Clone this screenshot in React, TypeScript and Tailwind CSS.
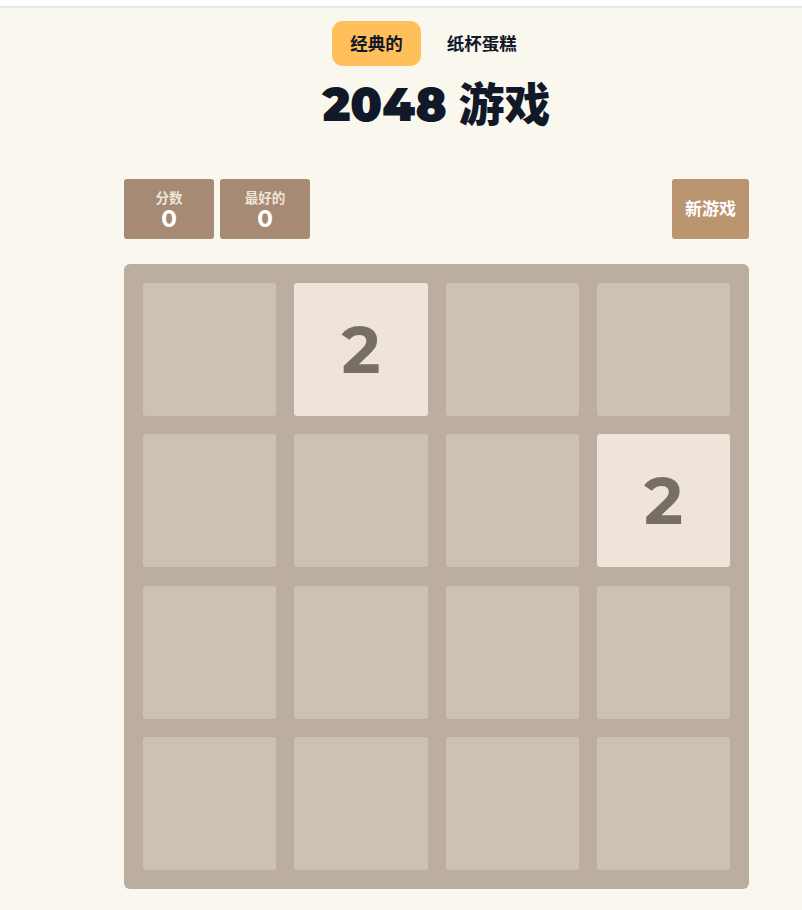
import { useState } from 'react'

type Mode = 'classic' | 'cupcake'

const MODES: Array<{ id: Mode; label: string }> = [
  { id: 'classic', label: '经典的' },
  { id: 'cupcake', label: '纸杯蛋糕' },
]

// 4x4 board, 0 = empty cell
const START_BOARD = [
  [0, 2, 0, 0],
  [0, 0, 0, 2],
  [0, 0, 0, 0],
  [0, 0, 0, 0],
]

const numFont = { fontFamily: '"Montserrat", "Lato", "Noto Sans", "Noto Sans CJK SC", sans-serif' }

const ScoreBox = ({ label, value }: { label: string; value: number }) => (
  <div className="w-[90px] h-[60px] rounded-[3px] bg-[#a68a73] flex flex-col items-center justify-center pt-[2px]">
    <span className="text-[13.5px] font-bold text-[#eee4da] leading-[17px]">{label}</span>
    <span className="text-[23px] font-bold text-white leading-[24px]" style={numFont}>
      {value}
    </span>
  </div>
)

const Tile = ({ value }: { value: number }) => (
  <div
    className={`h-[133px] rounded-[3px] flex items-center justify-center ${
      value ? 'bg-[#eee4da]' : 'bg-[#cdc1b4]'
    }`}
  >
    {value > 0 && (
      <span className="text-[66px] font-bold text-[#776e65] leading-none" style={numFont}>
        {value}
      </span>
    )}
  </div>
)

export default function App() {
  const [mode, setMode] = useState<Mode>('classic')
  const [score] = useState(0)
  const [best] = useState(0)

  return (
    <div
      className="min-h-[910px] bg-[#faf7ef]"
      style={{ fontFamily: '"Noto Sans", "Noto Sans CJK SC", sans-serif' }}
    >
      <div className="h-[8px] bg-white border-b-2 border-[#e5e7eb]" />

      <div className="ml-[124px] w-[625px] flex flex-col">
        {/* ── Mode tabs ─────────────────────────────────────────── */}
        <div className="flex justify-center gap-[8px] mt-[13px] pr-[6px]">
          {MODES.map((m) => (
            <button
              key={m.id}
              type="button"
              onClick={() => setMode(m.id)}
              className={`h-[45px] px-[18px] rounded-[11px] text-[17.5px] font-bold text-[#111827] ${
                mode === m.id ? 'bg-[#ffbf5a]' : ''
              }`}
            >
              {m.label}
            </button>
          ))}
        </div>

        {/* ── Title ─────────────────────────────────────────────── */}
        <h1 className="mt-[9px] text-center text-[46px] leading-[56px] font-black text-[#111827]">
          <span style={numFont}>2048</span> 游戏
        </h1>

        {/* ── Scores + new game ─────────────────────────────────── */}
        <div className="mt-[46px] flex items-center justify-between">
          <div className="flex gap-[6px]">
            <ScoreBox label="分数" value={score} />
            <ScoreBox label="最好的" value={best} />
          </div>
          <button
            type="button"
            className="w-[77px] h-[60px] rounded-[3px] bg-[#bb9470] text-white text-[17px] font-bold"
          >
            新游戏
          </button>
        </div>

        {/* ── Board ─────────────────────────────────────────────── */}
        <div className="mt-[25px] w-[625px] h-[625px] rounded-[6px] bg-[#bbada0] p-[19px] grid grid-cols-4 gap-[18px]">
          {START_BOARD.flat().map((v, i) => (
            <Tile key={i} value={v} />
          ))}
        </div>
      </div>
    </div>
  )
}
